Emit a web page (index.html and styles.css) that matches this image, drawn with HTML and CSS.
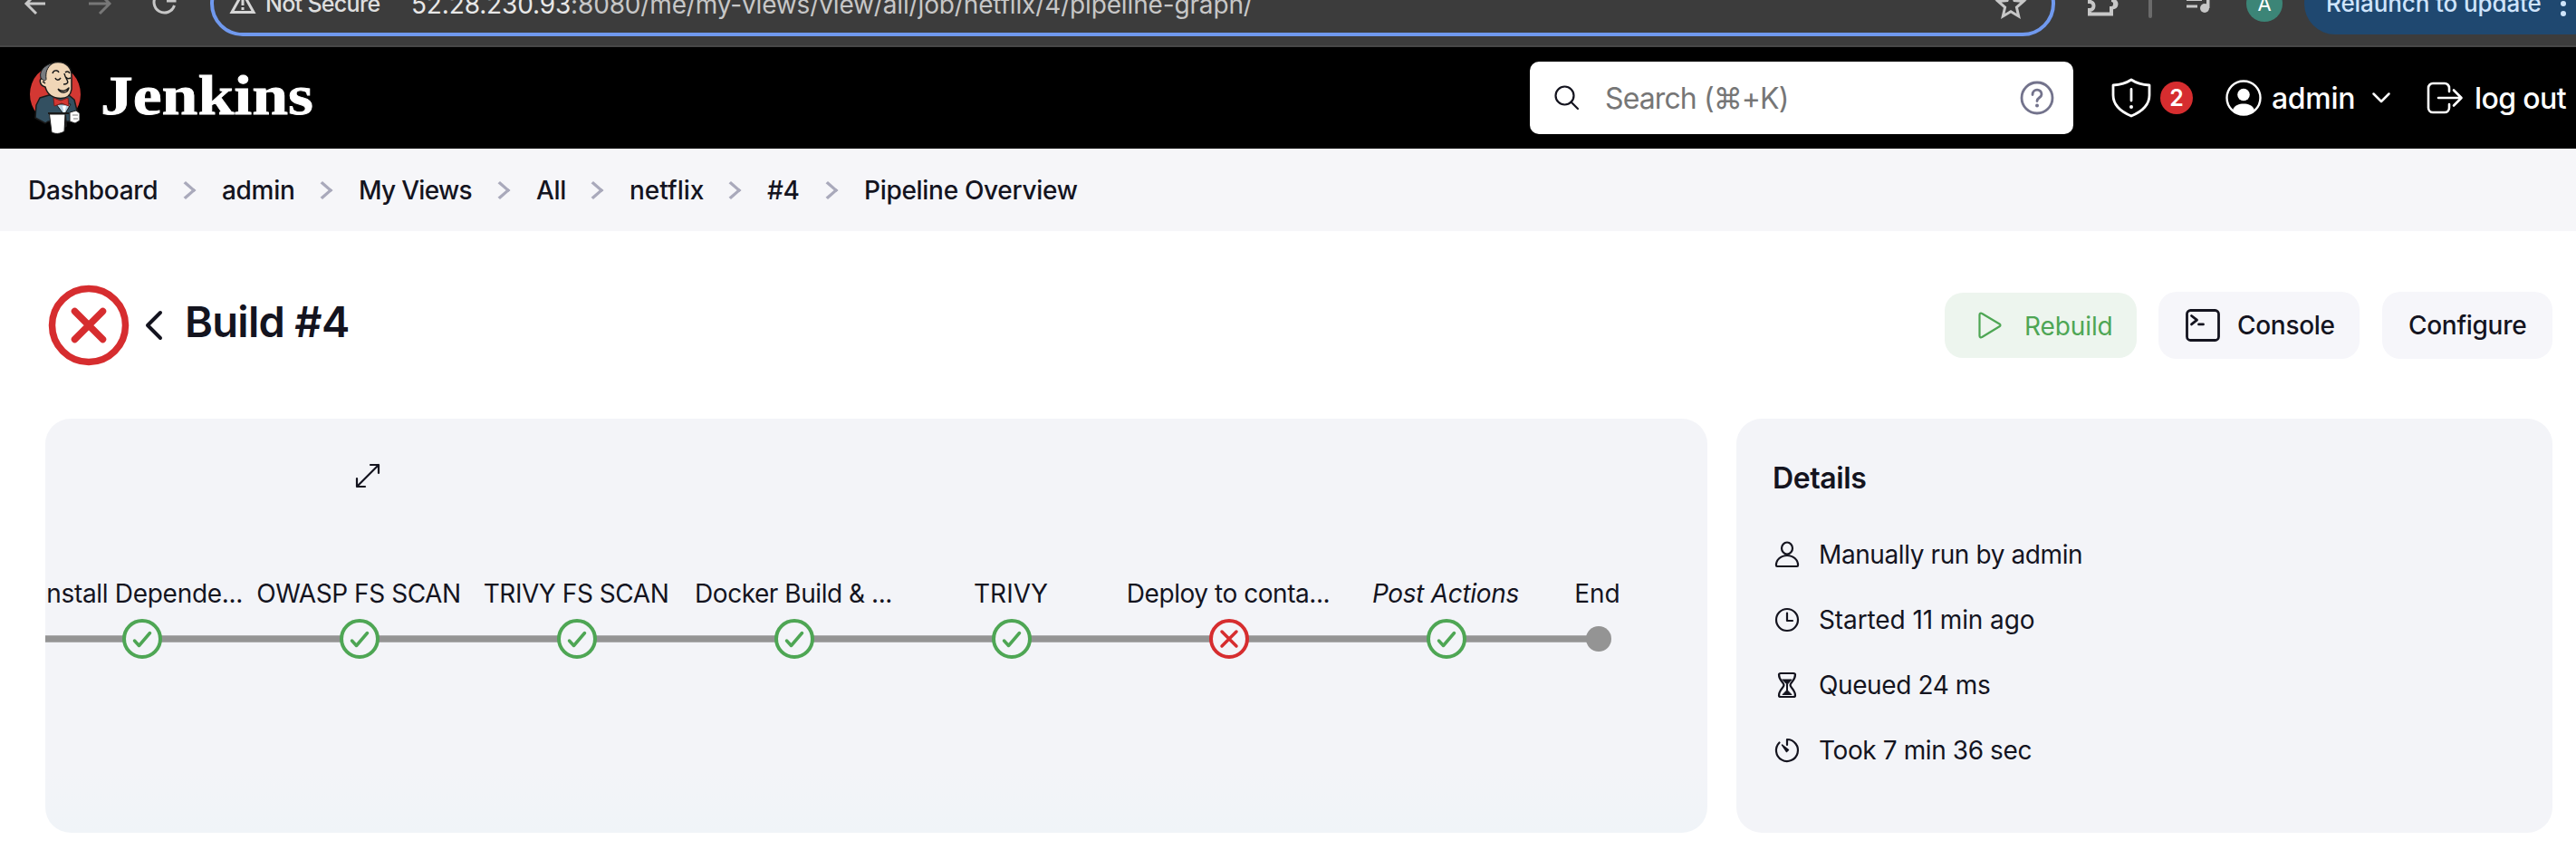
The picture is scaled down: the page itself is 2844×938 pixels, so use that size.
FILE: index.html
```html
<!DOCTYPE html>
<html lang="en">
<head>
<meta charset="utf-8">
<title>Build #4</title>
<link rel="stylesheet" href="styles.css">
</head>
<body>
<div class="toolbar">
  <svg class="nav-icons" width="232" height="40" viewBox="0 0 232 40" fill="none" stroke-width="3">
    <path d="M50 4H29M40-7 29 4l11 11" stroke="#c7c7c7"/>
    <path d="M98 4h22M110-7l11 11-11 11" stroke="#777"/>
    <path d="M191-4a11.500 11.500 0 1 0 1.500 10M193-8v9h-9" stroke="#c7c7c7"/>
  </svg>
  <div class="omnibox">
    <svg class="warn" width="30" height="30" viewBox="0 0 30 30" fill="none" stroke="#d6d6d6" stroke-width="3"><path d="M3 25.500 15 4l12 21.500zM15 11v7M15 20v3"/></svg>
    <span class="t secure">Not Secure</span>
    <span class="t url">52.28.230.93<span class="path">:8080/me/my-views/view/all/job/netflix/4/pipeline-graph/</span></span>
    <svg class="star" width="34" height="34" viewBox="0 0 34 34" fill="none" stroke="#c7c7c7" stroke-width="3"><path d="M17 4l4 9.500 10 .900-7.600 6.700 2.300 9.900L17 25.800 8.300 31l2.300-9.900L3 14.400l10-.900z"/></svg>
  </div>
  <svg class="ext-icons" width="136" height="40" viewBox="2305 0 136 40">
    <path d="M2307 0v2c6 0 6 9 0 9v4.500h24V9c5 0 6-9 0-9" fill="none" stroke="#c7c7c7" stroke-width="4"/>
    <path d="M2333-1a5 5 0 0 1 0 11z" fill="#c7c7c7"/>
    <path d="M2372 0h4v18a2 2 0 0 1-4 0z" fill="#6b6b6b"/>
    <path d="M2414-2h17v3h-17zM2414 5.500h12v3h-12z" fill="#c7c7c7"/>
    <circle cx="2434" cy="9" r="5" fill="#c7c7c7"/><path d="M2436-4h3.500V9h-3.500z" fill="#c7c7c7"/>
  </svg>
  <span class="avatar t">A</span>
  <div class="relaunch"><span class="t">Relaunch to update</span>
    <svg width="8" height="40" viewBox="0 0 8 40" fill="#cfe4fb"><circle cx="4" cy="4" r="3"/><circle cx="4" cy="15" r="3"/></svg></div>
</div>
<header class="header">
  <svg class="butler" width="56" height="82" viewBox="0 0 56 82" stroke-linejoin="round">
    <ellipse cx="28" cy="37" rx="28" ry="31" fill="#d33833"/>
    <path d="M11 41l10-3h22l6 5 3 12-4 12H20l-3 2-11-6 1-14z" fill="#335061" stroke="#1a1a1a" stroke-width="1.500"/>
    <path d="M29 48l9 12 7-12z" fill="#b9d3e4" stroke="#1a1a1a"/>
    <path d="M36 50l2 9 2-9z" fill="#fff"/>
    <path d="M17 29c-7-2-7-9-3-10C15 9 22 1.500 31 1.500c10 0 15 7 15 15v15c-1 7-6 10-12 10-9 0-15-5-17-12.500z" fill="#f0d6b7" stroke="#1a1a1a" stroke-width="1.500"/>
    <path d="M12 19C10 11 16 5 25 2.500c-6 5-8 10-7 18l-2 2z" fill="#777b80" stroke="#1a1a1a"/>
    <path d="M25 14c1-4 6-4 7-1M39 13c2-2 4-1 5 1M28 19c1 3 4 3 6 0M40 18c1 2 3 2 5 1M38 14c1 6 6 9 3 11-1 1-3 1-4 1M31 31c4 4 9 2 12-1-1 6-9 7-12 1M14 23l3 2" fill="none" stroke="#1a1a1a" stroke-width="1.500"/>
    <path d="M26 41l8 3 8-3 1 9-8-3-8 3z" fill="#d33833" stroke="#7a1c19"/>
    <path d="M20 58h23M39 60l1 12-3 2" stroke="#1a1a1a" stroke-width="2" fill="none"/>
    <path d="M21.500 59H39l-1 19c-5 3-10 3-14 1z" fill="#fff" stroke="#1a1a1a"/>
    <path d="M44 57l7-2 4 3v8l-5 3-6-2z" fill="#fff" stroke="#1a1a1a"/><path d="M47 60h6M48 64h5" stroke="#777"/>
  </svg>
  <span class="brand">Jenkins</span>
  <div class="search">
    <svg class="lens" width="28" height="28" viewBox="0 0 28 28" fill="none" stroke="#14141f" stroke-width="2.200" stroke-linecap="round"><circle cx="11.500" cy="11.500" r="10"/><path d="M18.500 18.500 26 26"/></svg>
    <span class="t ph">Search (⌘+K)</span>
    <svg width="38" height="38" viewBox="0 0 38 38" fill="none" stroke="#73738c" stroke-width="2.800" stroke-linecap="round"><circle cx="19" cy="19" r="17"/><path d="M14 15.500c0-7 10-7 10-.500 0 4-5 3.500-5 7.500"/><circle cx="19" cy="27.500" r="2" fill="#73738c" stroke="none"/></svg>
  </div>
  <svg class="shield" width="44" height="44" viewBox="0 0 44 44" fill="none" stroke="#fff" stroke-width="2.800" stroke-linejoin="round" stroke-linecap="round"><path d="M22 2c6 4 12 5.500 20 6v11c0 11-8 18-20 23C10 37 2 30 2 19V8c8-.500 14-2 20-6zM22 12.500v12.500"/><circle cx="22" cy="32" r="2" fill="#fff" stroke="none"/></svg>
  <span class="badge t">2</span>
  <svg class="user" width="40" height="40" viewBox="0 0 40 40"><circle cx="20" cy="20" r="18.500" fill="none" stroke="#fff" stroke-width="2.400"/><circle cx="20" cy="16.500" r="6.800" fill="#fff"/><path d="M8 33.500c2-5.500 7-7 12-7s10 1.500 12 7c-6 6-18 6-24 0z" fill="#fff"/></svg>
  <span class="t admin">admin</span>
  <svg class="caret" width="20" height="12" viewBox="0 0 20 12" fill="none" stroke="#fff" stroke-width="2.500" stroke-linecap="round" stroke-linejoin="round"><path d="M1.500 1.500 10 10l8.500-8.500"/></svg>
  <svg class="exit" width="40" height="36" viewBox="0 0 40 36" fill="none" stroke="#fff" stroke-width="2.600" stroke-linecap="round" stroke-linejoin="round"><path d="M25 11V7a5 5 0 0 0-5-5H7a5 5 0 0 0-5 5v22a5 5 0 0 0 5 5h13a5 5 0 0 0 5-5v-4M13 18h25M30 9.500l8.500 8.500-8.500 8.500"/></svg>
  <span class="t logout">log out</span>
</header>
<nav class="crumbs">
  <span class="t c1">Dashboard</span><i></i><span class="t c2">admin</span><i></i><span class="t c3">My Views</span><i></i><span class="t c4">All</span><i></i><span class="t c5">netflix</span><i></i><span class="t c6">#4</span><i></i><span class="t c7">Pipeline Overview</span>
</nav>
<main>
  <div class="title-row">
    <svg width="90" height="90" viewBox="0 0 90 90" fill="none" stroke="#d62d2f" stroke-width="7.500" stroke-linecap="round"><circle cx="45" cy="45" r="40.500"/><path d="M29.500 29.500l31 31M60.500 29.500l-31 31"/></svg>
    <svg class="back" width="18" height="32" viewBox="0 0 18 32" fill="none" stroke="#14141f" stroke-width="4" stroke-linecap="round" stroke-linejoin="round"><path d="M16 2 2 16l14 14"/></svg>
    <h1 class="t">Build #4</h1>
    <div class="btn rebuild"><svg width="26" height="30" viewBox="0 0 26 30" fill="none" stroke="#4ea654" stroke-width="2.200" stroke-linejoin="round"><path d="M1.500 3.500c0-1.800 1.400-2.500 2.700-1.500l19.300 11.500c1.300.800 1.300 2 0 2.800L4.200 28c-1.300 1-2.700.300-2.700-1.500z"/></svg><span class="t">Rebuild</span></div>
    <div class="btn console"><svg width="38" height="36" viewBox="0 0 38 36" fill="none" stroke="#14141f" stroke-width="2.800" stroke-linecap="round" stroke-linejoin="round"><rect x="1.500" y="1.500" width="35" height="33" rx="4"/><path d="M6.500 7.500l6 4.700-6 4.700M14.500 16.900h5"/></svg><span class="t">Console</span></div>
    <div class="btn configure"><span class="t">Configure</span></div>
  </div>
  <div class="cards">
    <section class="card graph">
      <svg class="expand" width="28" height="28" viewBox="0 0 28 28" fill="none" stroke="#14141f" stroke-width="2.200" stroke-linecap="round" stroke-linejoin="round"><path d="M2 26 26 2M17 2h9v9M2 17v9h9"/></svg>
      <div class="labels">
        <span class="t l1">Install Depende...</span><span class="t l2">OWASP FS SCAN</span><span class="t l3">TRIVY FS SCAN</span><span class="t l4">Docker Build &amp; ...</span><span class="t l5">TRIVY</span><span class="t l6">Deploy to conta...</span><span class="t l7">Post Actions</span><span class="t l8">End</span>
      </div>
      <svg class="line" width="1835" height="46" viewBox="50 682 1835 46" fill="none">
        <defs><g id="ok"><circle r="20" fill="#f3f4f8" stroke="#4ea654" stroke-width="4"/><path d="M-8.500 2l5 5.500L8.500-6.500" stroke="#4ea654" stroke-width="3.500" stroke-linecap="round" stroke-linejoin="round"/></g></defs>
        <path d="M50 705h1715" stroke="#949494" stroke-width="7.500"/>
        <use href="#ok" x="157" y="705"/><use href="#ok" x="397" y="705"/><use href="#ok" x="637" y="705"/><use href="#ok" x="877" y="705"/><use href="#ok" x="1117" y="705"/><use href="#ok" x="1597" y="705"/>
        <circle cx="1357" cy="705" r="20" fill="#f3f4f8" stroke="#d62d2f" stroke-width="4"/><path d="M1349 697l16 16M1365 697l-16 16" stroke="#d62d2f" stroke-width="3.500" stroke-linecap="round"/>
        <circle cx="1765" cy="705" r="14" fill="#949494"/>
      </svg>
    </section>
    <section class="card details">
      <h2 class="t">Details</h2>
      <div class="item"><svg width="30" height="30" viewBox="0 0 30 30"><ellipse cx="15" cy="8" rx="6" ry="6.500"/><path d="M3 27c-.500-6 5-11 12-11s12.500 5 12 11c0 .800-.500 1-1 1H4c-.600 0-1-.200-1-1z"/></svg><span class="t d1">Manually run by admin</span></div>
      <div class="item"><svg width="30" height="30" viewBox="0 0 30 30"><circle cx="15" cy="15" r="12"/><path d="M15 7.500V16h6"/></svg><span class="t d2">Started 11 min ago</span></div>
      <div class="item"><svg width="30" height="30" viewBox="0 0 30 30"><path d="M6 3.500C6 2.500 7 2 8 2h14c1 0 2 .500 2 1.500C24 10 18.500 12 18.500 15S24 20 24 26.500c0 1-1 1.500-2 1.500H8c-1 0-2-.500-2-1.500C6 20 11.500 18 11.500 15S6 10 6 3.500z"/><path d="M10 9h10l-4.500 5v7l4.500 4.500H10l4.500-4.500v-7z" fill="#14141f" stroke-width="1"/></svg><span class="t d3">Queued 24 ms</span></div>
      <div class="item"><svg width="30" height="30" viewBox="0 0 30 30"><path d="M15 9V3a12 12 0 1 1-8.500 3.500"/><path d="M9.500 9l7 5.500-2 2z" fill="#14141f" stroke-width="1.500"/></svg><span class="t d4">Took 7 min 36 sec</span></div>
    </section>
  </div>
</main>
</body>
</html>
```

FILE: styles.css
```css
* { box-sizing: border-box; }
body {
  margin: 0;
  width: 2844px;
  height: 938px;
  overflow: hidden;
  background: #fff;
  color: #14141f;
  font-family: Inter, "Noto Sans", "DejaVu Sans", sans-serif;
  font-size: 28px;
}
svg { display: block; flex: none; overflow: visible; }
.t { white-space: nowrap; line-height: 40px; flex: none; }

.toolbar {
  height: 52px;
  display: flex;
  align-items: flex-start;
  background: #3c3c3c;
  border-bottom: 2px solid #474747;
  overflow: hidden;
}
.omnibox {
  flex: none;
  width: 2037px;
  height: 72px;
  margin-top: -32px;
  border: 4px solid #7099ee;
  border-radius: 36px;
  display: flex;
  padding: 14px 0 0 17px;
}
.warn { margin-top: 2px; }
.secure { color: #dedede; font-size: 25px; letter-spacing: -0.7px; font-weight: 500; width: 162px; margin: -2px 0 0 10px; }
.url { color: #e8e8e8; letter-spacing: -0.15px; margin: -1px 0 0 -1px; }
.path { color: #c7c7c7; }
.star { margin: 1px 28px 0 auto; }
.ext-icons { margin-left: 36px; }
.avatar {
  width: 40px; height: 40px; margin: -16px 0 0 39px;
  border-radius: 50%; background: #3c8577; color: #fff;
  font-size: 22px; text-align: center;
}
.relaunch {
  flex: none; width: 330px; height: 68px; margin: -30px 0 0 24px;
  border-radius: 34px; background: #1f4870; color: #cfe4fb;
  display: flex; padding: 14px 0 0 24px; font-size: 26px; font-weight: 500; letter-spacing: -0.1px;
}
.relaunch .t { width: 233px; }
.relaunch svg { margin: 16px 0 0 25px; }

.header {
  height: 112px; background: #000; color: #fff;
  display: flex; align-items: center; padding-left: 33px;
  font-size: 32px; font-weight: 500; letter-spacing: -0.3px;
}
.brand {
  font: bold 62px/80px "Liberation Serif", serif;
  letter-spacing: 0;
  margin: -7px 0 0 22px; width: 1578px;
  transform: scaleX(1.155); transform-origin: 0 50%;
  -webkit-text-stroke: 0.8px #fff;
}
.search {
  width: 600px; height: 80px; background: #fff; border-radius: 10px;
  display: flex; align-items: center; padding: 0 21px 0 27px; color: #767676;
}
.ph { margin: 2px auto 0 28px; font-weight: 400; letter-spacing: -0.9px; }
.shield { margin-left: 42px; }
.badge {
  width: 36px; height: 36px; line-height: 36px; margin-left: 10px;
  border-radius: 50%; background: #d62d2f; font-size: 25px; font-weight: 600; text-align: center;
}
.user { margin-left: 36px; }
.admin { width: 92px; margin: 2px 0 0 11px; }
.caret { margin-left: 19px; }
.exit { margin-left: 40px; }
.logout { margin: 2px 0 0 13px; letter-spacing: -0.6px; }

.crumbs {
  height: 91px; background: #f6f6f9; display: flex; align-items: center;
  padding-left: 31px; font-weight: 500; letter-spacing: -0.3px;
}
.crumbs i {
  width: 14px; height: 14px; flex: none; margin: 0 33px 0 23px;
  border: solid #a9a9bb; border-width: 3px 3px 0 0; transform: scaleX(1.15) rotate(45deg);
}
.c1 { width: 144px; }
.c2 { width: 81px; }
.c3 { width: 126px; letter-spacing: -0.7px; }
.c4 { width: 33px; }
.c5 { width: 82px; letter-spacing: 0; }
.c6 { width: 37px; }

main { padding: 0 26px 0 50px; }
.title-row { height: 207px; display: flex; align-items: center; padding-left: 3px; }
.back { margin-left: 18px; }
h1.t { margin: -8px auto 0 25px; font-size: 47px; font-weight: 600; line-height: 60px; letter-spacing: -0.7px; }
.btn {
  height: 74px; margin-left: 25px; border-radius: 20px; background: #f6f6fa;
  display: flex; align-items: center; font-weight: 500; padding-left: 30px; letter-spacing: -0.3px;
}
.rebuild { width: 212px; height: 72px; background: #edf5ee; color: #4ea654; font-weight: 400; padding-left: 37px; letter-spacing: -0.1px; }
.rebuild .t { margin: 2px 0 0 25px; }
.console { width: 222px; margin-left: 24px; }
.console .t { margin-left: 19px; }
.configure { width: 188px; padding-left: 29px; }

.cards { display: flex; gap: 32px; }
.card { height: 457px; border-radius: 28px; background: #f3f4f8; overflow: hidden; }
.graph { width: 1835px; background: linear-gradient(#f3f4f8 85%, #f0f4f8); }
.expand { margin: 49px 0 0 342px; }
.labels { display: flex; margin: 96px 0 0 -14px; height: 40px; letter-spacing: -0.45px; }
.labels .t { width: 240px; text-align: center; }
.labels .l1 { letter-spacing: -0.3px; }
.labels .l5, .labels .l8 { letter-spacing: 0; }
.labels .l7 { font-style: italic; letter-spacing: -0.3px; }
.labels .l8 { width: 95px; }
.line { margin-top: 7px; }
.details { flex: 1; padding: 46px 0 0 41px; letter-spacing: -0.4px; }
h2.t { margin: 0 0 28px -1px; font-size: 32px; font-weight: 600; line-height: 40px; }
.item { height: 72px; display: flex; align-items: center; }
.item svg { fill: none; stroke: #14141f; stroke-width: 2.2; stroke-linecap: round; stroke-linejoin: round; }
.item .t { margin-left: 20px; }
.item .d2 { letter-spacing: -0.1px; }
```
